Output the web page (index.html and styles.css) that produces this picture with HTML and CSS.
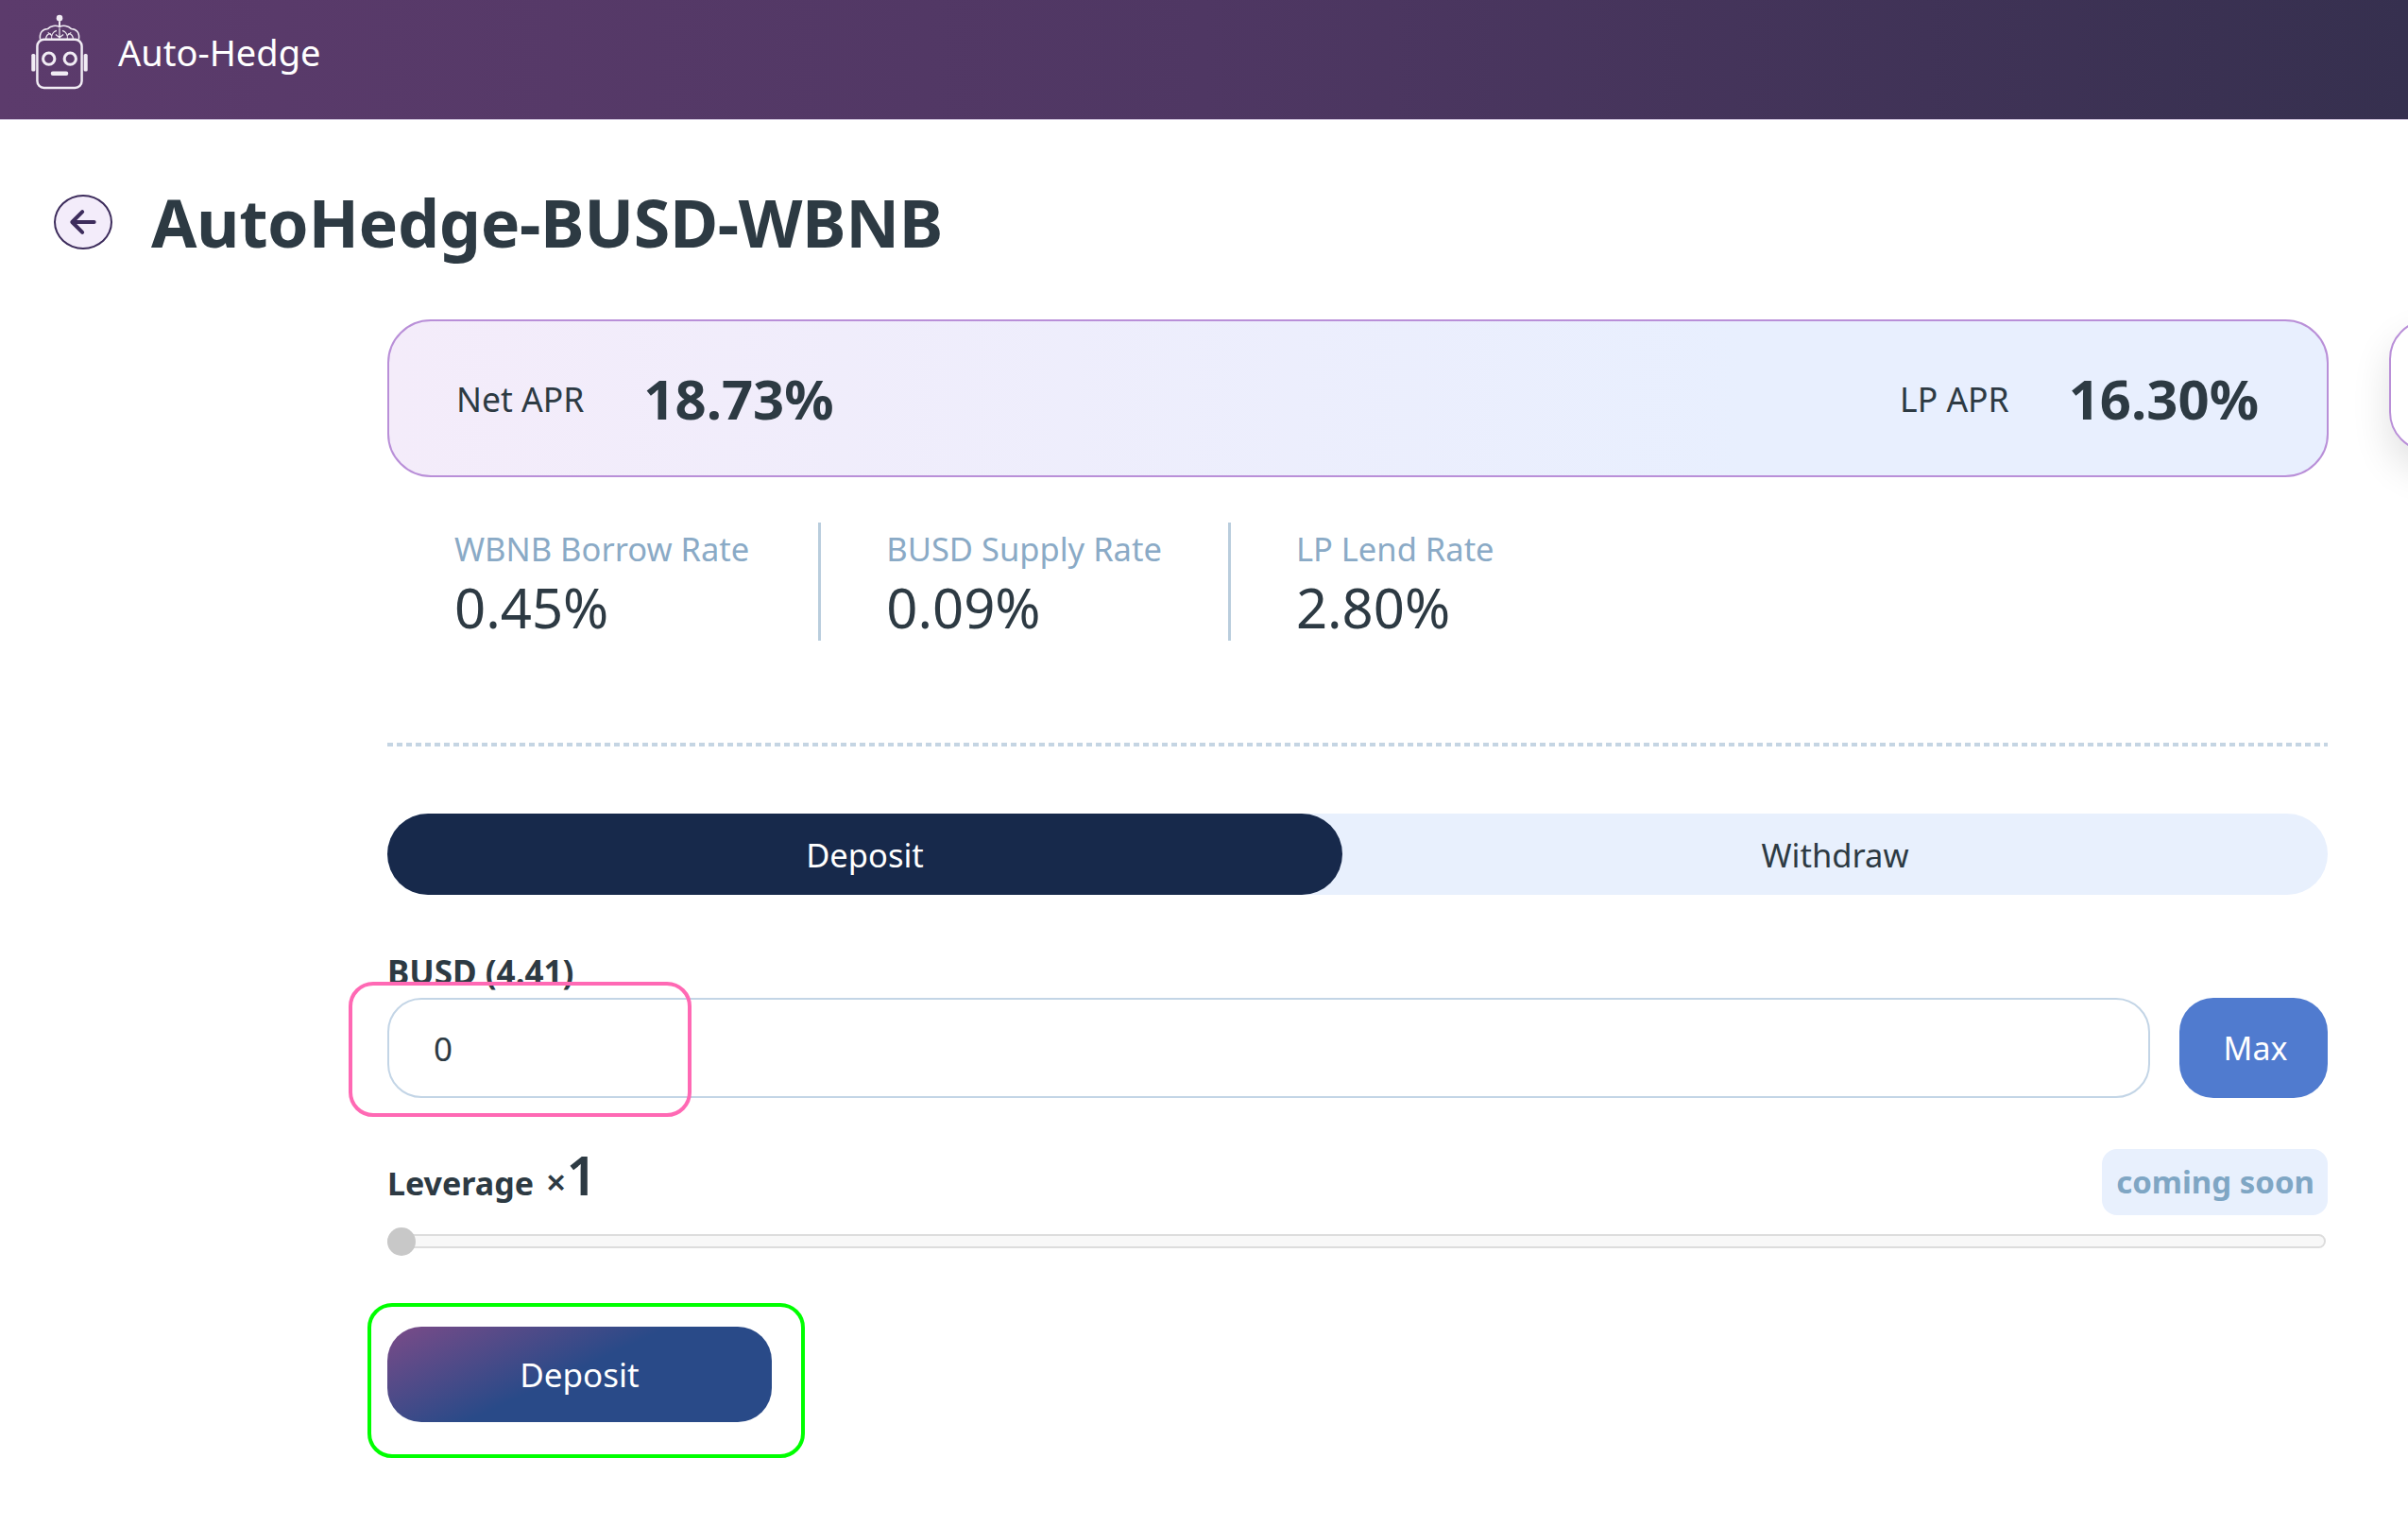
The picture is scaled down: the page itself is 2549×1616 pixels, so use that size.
FILE: index.html
```html
<!DOCTYPE html>
<html lang="en">
<head>
    <meta charset="UTF-8">
    <meta name="viewport" content="width=device-width, initial-scale=1.0">
    <title>Auto-Hedge</title>
    <link rel="stylesheet" href="styles.css">
</head>
<body>

    <header class="topbar">
        <svg class="logo" viewBox="0 0 64 80" fill="none" stroke="#f1ecf4" stroke-width="2.4">
            <circle cx="32" cy="5" r="3.2" fill="#f1ecf4" stroke="none"/>
            <path d="M32 8v6" stroke-width="2"/>
            <path stroke-width="1.5" d="M12 27c-1-7 3-11 8-11 3-3 8-4 12-2 4-2 9-1 12 2 5 0 9 4 8 11"/>
            <path stroke-width="1.2" d="M18 27c0-4 2-6 5-6M24 27c-1-5 2-8 5-9M32 15v12M40 27c1-5-2-8-5-9M46 27c0-4-2-6-5-6M20 20l4 3M44 20l-4 3M28 22l4 3 4-3"/>
            <rect x="9" y="27" width="46" height="50" rx="7"/>
            <rect x="3" y="42" width="4" height="18" rx="1.5" fill="#f1ecf4" stroke="none"/>
            <rect x="57" y="42" width="4" height="18" rx="1.5" fill="#f1ecf4" stroke="none"/>
            <circle cx="21" cy="47" r="6" stroke-width="3"/>
            <circle cx="43" cy="47" r="6" stroke-width="3"/>
            <rect x="23" y="60" width="18" height="4.5" rx="2" fill="#f1ecf4" stroke="none"/>
        </svg>
        <span class="brand">Auto-Hedge</span>
    </header>

    <div class="page-title">
        <button class="back-btn" title="Back">
            <svg viewBox="0 0 24 24" fill="none" stroke="#3d2c5c" stroke-width="2.4" stroke-linecap="round" stroke-linejoin="round">
                <path d="M19 12H5.500M11.500 5.500L5 12l6.500 6.500"/>
            </svg>
        </button>
        <h1>AutoHedge-BUSD-WBNB</h1>
    </div>

    <main class="content">
        <div class="apr-slider">
            <section class="apr-card">
                <div class="apr-item">
                    <span class="apr-label">Net APR</span>
                    <span class="apr-value">18.73%</span>
                </div>
                <div class="apr-item">
                    <span class="apr-label">LP APR</span>
                    <span class="apr-value">16.30%</span>
                </div>
            </section>
            <section class="apr-card next-card"></section>
        </div>

        <div class="rates">
            <div class="rate">
                <div class="rate-label">WBNB Borrow Rate</div>
                <div class="rate-value">0.45%</div>
            </div>
            <div class="rate">
                <div class="rate-label">BUSD Supply Rate</div>
                <div class="rate-value">0.09%</div>
            </div>
            <div class="rate">
                <div class="rate-label">LP Lend Rate</div>
                <div class="rate-value">2.80%</div>
            </div>
        </div>

        <hr class="dotted">

        <div class="tabs">
            <button class="tab active">Deposit</button>
            <button class="tab">Withdraw</button>
        </div>

        <label class="field-label">BUSD (4.41)</label>
        <div class="amount-row">
            <input class="amount-input" type="text" value="0">
            <button class="max-btn">Max</button>
            <!-- annotation box -->
            <div class="mark mark-pink"></div>
        </div>

        <div class="leverage-row">
            <span class="leverage-label">Leverage <span class="times">×</span><span class="leverage-num">1</span></span>
            <span class="soon">coming soon</span>
        </div>
        <div class="slider"><div class="thumb"></div></div>

        <div class="submit-row">
            <button class="submit-btn">Deposit</button>
            <!-- annotation box -->
            <div class="mark mark-green"></div>
        </div>
    </main>

</body>
</html>
```

FILE: styles.css
```css
* {
    box-sizing: border-box;
}

body {
    margin: 0;
    overflow: hidden;
    height: 1616px;
    background-color: #fff;
    color: #2d3a43;
    font-family: "Noto Sans", "Open Sans", sans-serif;
}

button, input {
    font-family: inherit;
}

.topbar {
    height: 127px;
    display: flex;
    align-items: center;
    padding: 0 0 16px 29px;
    background: linear-gradient(90deg, #5c3b6c 0%, #4f3763 50%, #36304f 100%);
    border-bottom: 1px solid #c9bdd6;
}

.logo {
    width: 68px;
    height: 82px;
}

.brand {
    margin-left: 28px;
    font-size: 38px;
    color: #fff;
}

.page-title {
    display: flex;
    align-items: center;
    height: 92px;
    margin-top: 62px;
    padding-left: 57px;
}

.back-btn {
    width: 62px;
    height: 58px;
    padding: 0;
    display: flex;
    align-items: center;
    justify-content: center;
    background-color: #f3ecfa;
    border: 2px solid #3d2c5c;
    border-radius: 50%;
}

.back-btn svg {
    flex: none;
    width: 40px;
    height: 40px;
}

h1 {
    margin: 0 0 0 41px;
    font-size: 70px;
    font-weight: 700;
    line-height: 92px;
    letter-spacing: -0.4px;
}

.content {
    padding: 57px 85px 0 410px;
    overflow: hidden;
    height: 1397px;
}

.apr-slider {
    display: flex;
    gap: 64px;
    width: 2139px;
}

.apr-card {
    flex: none;
    width: 2055px;
    height: 167px;
    padding: 0 72px 0 71px;
    display: flex;
    align-items: center;
    justify-content: space-between;
    background: linear-gradient(90deg, #f4ecfa 0%, #e8effe 70%);
    border: 2px solid #b98fd8;
    border-radius: 46px;
}

.next-card {
    height: 140px;
    border-radius: 42px;
    background: #fff;
    box-shadow: 0 20px 40px rgba(0,0,0,0.12);
}

.apr-item {
    display: flex;
    align-items: center;
    gap: 63px;
}

.apr-label {
    font-size: 35.500px;
}

.apr-value {
    font-size: 58px;
    font-weight: 700;
}

.rates {
    display: flex;
    margin-top: 48px;
    height: 125px;
}

.rate {
    padding: 0 70px 0 69px;
    border-right: 3px solid #b9cddd;
}

.rate:first-child {
    padding: 0 73px 0 71px;
}

.rate:last-child {
    border-right: none;
}

.rate-label {
    margin-top: 4px;
    font-size: 34.500px;
    line-height: 47px;
    color: #8aaac6;
}

.rate-value {
    margin-top: 1px;
    font-size: 58px;
    line-height: 76px;
}

.dotted {
    height: 4px;
    margin: 108px 0 0;
    border: none;
    background: repeating-linear-gradient(90deg, #c5d5e3 0, #c5d5e3 6px, transparent 6px, transparent 10px);
}

.tabs {
    display: flex;
    height: 86px;
    margin-top: 71px;
    background-color: #e8f0fd;
    border-radius: 43px;
}

.tab {
    flex: 1;
    padding: 0;
    font-size: 34.500px;
    color: #2d3a43;
    background: none;
    border: none;
    border-radius: 43px;
}

.tab.active {
    flex: none;
    width: 1011px;
    color: #fff;
    background-color: #17294b;
}

.field-label {
    display: block;
    margin-top: 60px;
    font-size: 35px;
    font-weight: 700;
    line-height: 44px;
}

.amount-row {
    position: relative;
    display: flex;
    gap: 31px;
    height: 106px;
    margin-top: 5px;
}

.amount-input {
    flex: 1;
    min-width: 0;
    padding: 0 47px;
    font-size: 35px;
    color: #2d3a43;
    background: #fff;
    border: 2px solid #c3d5e6;
    border-radius: 36px;
    outline: none;
}

.max-btn {
    width: 157px;
    padding: 0 0 0 4px;
    font-size: 34px;
    color: #fff;
    background-color: #507bcf;
    border: none;
    border-radius: 36px;
}

.mark {
    position: absolute;
    border-style: solid;
    border-width: 4px;
    border-radius: 26px;
    pointer-events: none;
}

.mark-pink {
    left: -41px;
    top: -17px;
    width: 363px;
    height: 143px;
    border-color: #ff69b4;
}

.mark-green {
    left: -21px;
    top: -25px;
    width: 463px;
    height: 164px;
    border-color: #0f0;
}

.leverage-row {
    display: flex;
    align-items: center;
    justify-content: space-between;
    height: 70px;
    margin-top: 54px;
}

.leverage-label {
    font-size: 34px;
    font-weight: 700;
    line-height: 70px;
}

.times {
    margin-left: 4px;
    font-weight: 600;
    font-size: 38px;
}

.leverage-num {
    font-size: 57px;
    font-weight: 600;
    line-height: 40px;
}

.soon {
    padding: 0 14px 0 15px;
    font-size: 33px;
    font-weight: 700;
    line-height: 70px;
    color: #7fa6c4;
    background-color: #e8f0fd;
    border-radius: 16px;
}

.slider {
    position: relative;
    height: 15px;
    margin: 20px 2px 0 0;
    background-color: #f8f8f8;
    border: 2px solid #ddd;
    border-radius: 8px;
}

.thumb {
    position: absolute;
    left: -2px;
    top: -9px;
    width: 30px;
    height: 30px;
    background-color: #c8c8c8;
    border-radius: 50%;
}

.submit-row {
    position: relative;
    margin-top: 83px;
}

.submit-btn {
    display: block;
    width: 407px;
    height: 101px;
    font-size: 35px;
    color: #fff;
    background: linear-gradient(155deg, #7b4b88 0%, #294a88 48%);
    border: none;
    border-radius: 36px;
}
```
